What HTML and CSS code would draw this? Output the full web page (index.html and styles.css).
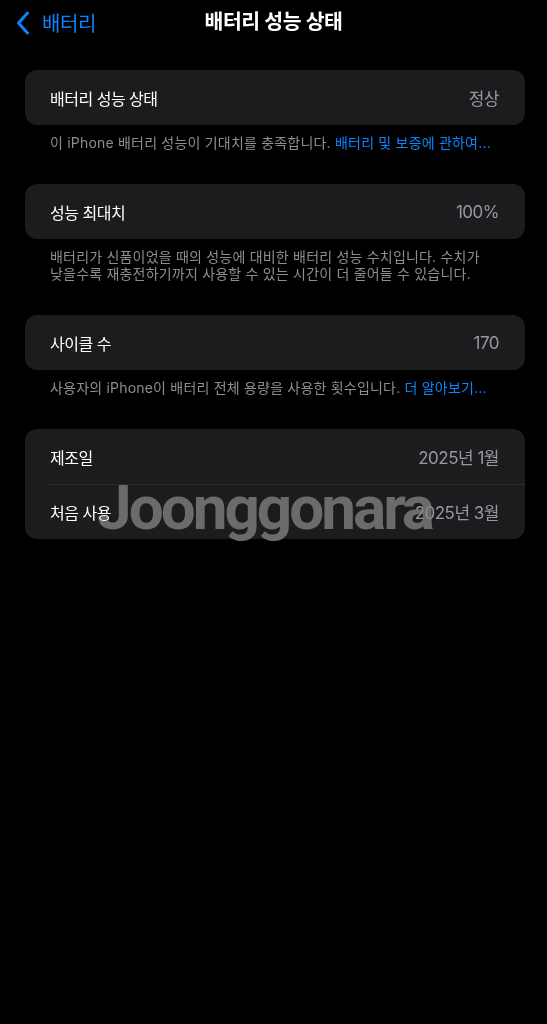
FILE: index.html
```html
<!DOCTYPE html>
<html lang="ko">
<head>
<meta charset="utf-8">
<title>배터리 성능 상태</title>
<link rel="stylesheet" href="styles.css">
</head>
<body>
<div class="page">
  <header class="nav">
    <a class="nav-back" href="#">
      <svg class="chevron" width="14" height="24" viewBox="0 0 14 24" aria-hidden="true">
        <path d="M11.5 2 L2.5 12 L11.5 22" fill="none" stroke="#0a84ff" stroke-width="3" stroke-linecap="round" stroke-linejoin="round"/>
      </svg>
      <span>배터리</span>
    </a>
    <h1 class="nav-title">배터리 성능 상태</h1>
  </header>

  <main class="content">
    <section class="group">
      <div class="card">
        <div class="row"><span class="label">배터리 성능 상태</span><span class="value">정상</span></div>
      </div>
      <p class="note">이 iPhone 배터리 성능이 기대치를 충족합니다. <a href="#">배터리 및 보증에 관하여...</a></p>
    </section>

    <section class="group">
      <div class="card">
        <div class="row"><span class="label">성능 최대치</span><span class="value">100%</span></div>
      </div>
      <p class="note">배터리가 신품이었을 때의 성능에 대비한 배터리 성능 수치입니다. 수치가 낮을수록 재충전하기까지 사용할 수 있는 시간이 더 줄어들 수 있습니다.</p>
    </section>

    <section class="group">
      <div class="card">
        <div class="row"><span class="label">사이클 수</span><span class="value">170</span></div>
      </div>
      <p class="note">사용자의 iPhone이 배터리 전체 용량을 사용한 횟수입니다. <a href="#">더 알아보기...</a></p>
    </section>

    <section class="group">
      <div class="card">
        <div class="row"><span class="label">제조일</span><span class="value">2025년 1월</span></div>
        <div class="row"><span class="label">처음 사용</span><span class="value">2025년 3월</span></div>
      </div>
    </section>
  </main>

  <div class="watermark">Joonggonara</div>
</div>
</body>
</html>
```

FILE: styles.css
```css
html, body {
  margin: 0;
  padding: 0;
  background: #000;
}

body {
  font-family: "Inter", "Noto Sans CJK KR", sans-serif;
  color: #fff;
}

.page {
  position: relative;
  min-height: 1024px;
}

/* navigation bar */
.nav {
  position: relative;
  height: 42px;
  display: flex;
  align-items: center;
  justify-content: center;
}

.nav-back {
  position: absolute;
  left: 16px;
  top: 8px;
  display: flex;
  align-items: center;
  gap: 12px;
  color: #0a84ff;
  text-decoration: none;
  font-size: 20px;
  letter-spacing: -0.4px;
}

.chevron {
  display: block;
}

.nav-title {
  margin: 0;
  margin-top: -3px;
  font-size: 20.5px;
  font-weight: 600;
  letter-spacing: -0.5px;
}

/* grouped list */
.content {
  padding: 28px 22px 0 25px;
}

.group {
  margin-bottom: 33px;
}

.card {
  background: #1c1c1e;
  border-radius: 12px;
  overflow: hidden;
}

.row {
  height: 55px;
  display: flex;
  align-items: center;
  justify-content: space-between;
  padding: 0 26px 0 25px;
  font-size: 16px;
  letter-spacing: -0.5px;
  position: relative;
}

.row + .row::before {
  content: "";
  position: absolute;
  left: 23px;
  right: 0;
  top: 0;
  height: 1px;
  background: #2c2c2f;
}

.label {
  color: #fff;
}

.value {
  color: #98989e;
  font-size: 17px;
}

.note {
  margin: 0;
  padding: 9px 25px 0 25px;
  font-size: 14px;
  line-height: 17px;
  color: #8d8d93;
  letter-spacing: 0.2px;
  word-break: keep-all;
}

.note a {
  color: #0a84ff;
  text-decoration: none;
}

/* site stamp laid over the page */
.watermark {
  position: absolute;
  left: 97px;
  top: 471px;
  font-family: "Roboto", sans-serif;
  font-weight: 700;
  font-size: 62px;
  letter-spacing: -3px;
  color: #6b6b6b;
  mix-blend-mode: lighten;
  pointer-events: none;
}
```
